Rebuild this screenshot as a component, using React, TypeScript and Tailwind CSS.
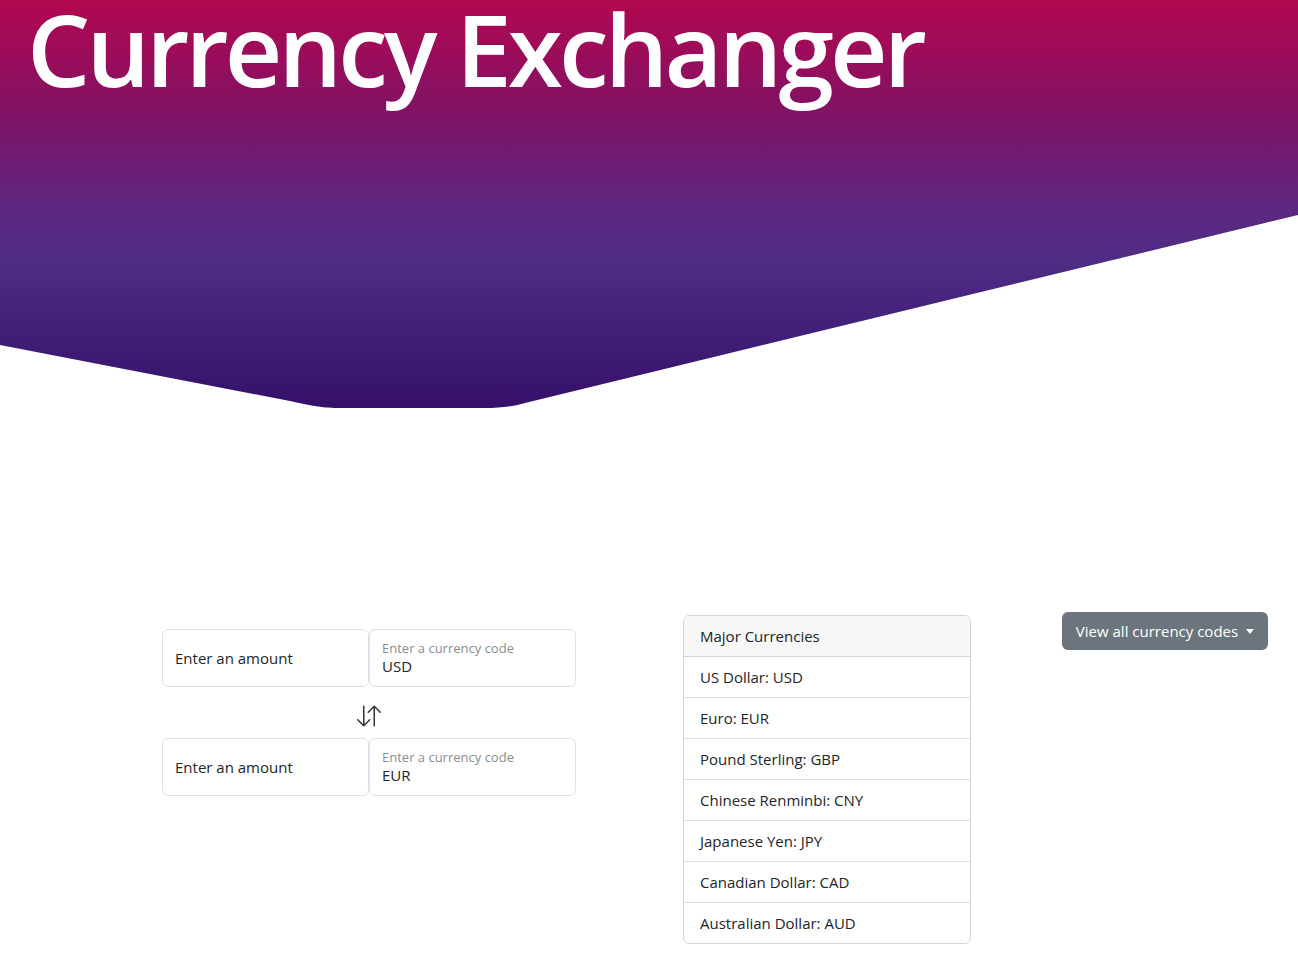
import React from "react";

const font = { fontFamily: '"Open Sans", "Noto Sans", sans-serif' };

const currencies = [
  "US Dollar: USD",
  "Euro: EUR",
  "Pound Sterling: GBP",
  "Chinese Renminbi: CNY",
  "Japanese Yen: JPY",
  "Canadian Dollar: CAD",
  "Australian Dollar: AUD",
];

function InputRow({ code }: { code: string }) {
  return (
    <div className="flex">
      <div className="w-[207px] h-[58px] border border-[#dee2e6] rounded-[6px] flex items-center px-[12px] text-[15px] text-[#212529]">
        Enter an amount
      </div>
      <div className="w-[207px] h-[58px] border border-[#dee2e6] rounded-[6px] flex flex-col justify-center px-[12px] leading-none">
        <span className="text-[13px] text-[#8a8d90] leading-[16px]">Enter a currency code</span>
        <span className="text-[15px] text-[#212529] leading-[20px]">{code}</span>
      </div>
    </div>
  );
}

export default function App() {
  return (
    <div className="w-[1298px] min-h-[964px] bg-white" style={font}>
      <header className="relative h-[408px]">
        <svg
          className="absolute inset-0 w-full h-full"
          viewBox="0 0 1298 408"
          preserveAspectRatio="none"
        >
          <defs>
            <linearGradient id="hg" x1="0" y1="0" x2="0" y2="1">
              <stop offset="0" stopColor="#b3074f" />
              <stop offset="0.3" stopColor="#7c1367" />
              <stop offset="0.5" stopColor="#5e2780" />
              <stop offset="0.65" stopColor="#4d2c85" />
              <stop offset="1" stopColor="#34106a" />
            </linearGradient>
          </defs>
          <path
            d="M0 0 H1298 V215 L525 403 C510 407 500 408 485 408 H345 C330 408 320 408 290 401 L0 345 Z"
            fill="url(#hg)"
          />
        </svg>
        <h1 className="relative pl-[27px] pt-0 text-white text-[100px] leading-[96px] tracking-[-3.85px] font-semibold">
          Currency Exchanger
        </h1>
      </header>

      <main className="flex items-start mt-[204px] text-[15px] text-[#212529]">
        <div className="ml-[162px] mt-[17px] w-[414px] flex flex-col">
          <InputRow code="USD" />
          <div className="h-[51px] flex items-start justify-center pt-[17px]">
            <svg width="24" height="24" viewBox="0 0 16 16" fill="#333">
              <path d="M11.5 15a.5.5 0 0 0 .5-.5V2.707l3.146 3.147a.5.5 0 0 0 .708-.708l-4-4a.5.5 0 0 0-.708 0l-4 4a.5.5 0 1 0 .708.708L11 2.707V14.5a.5.5 0 0 0 .5.5m-7-14a.5.5 0 0 1 .5.5v11.793l3.146-3.147a.5.5 0 0 1 .708.708l-4 4a.5.5 0 0 1-.708 0l-4-4a.5.5 0 0 1 .708-.708L4 13.293V1.5a.5.5 0 0 1 .5-.5" />
            </svg>
          </div>
          <InputRow code="EUR" />
        </div>

        <div className="ml-[107px] mt-[3px] w-[288px] border border-[#d6d6d6] rounded-[6px] overflow-hidden">
          <div className="h-[41px] bg-[#f7f7f7] flex items-center px-[16px] border-b border-[#d6d6d6]">
            Major Currencies
          </div>
          {currencies.map((c, i) => (
            <div
              key={c}
              className={
                i < currencies.length - 1
                  ? "h-[41px] flex items-center px-[16px] border-b border-[#dedede]"
                  : "h-[40px] flex items-center px-[16px]"
              }
            >
              {c}
            </div>
          ))}
        </div>

        <button className="ml-[91px] h-[38px] w-[206px] bg-[#6c757d] text-white rounded-[6px] flex items-center justify-center text-[15px]">
          View all currency codes
          <span className="ml-[8px] w-0 h-0 border-t-[5px] border-t-white border-l-[4px] border-l-transparent border-r-[4px] border-r-transparent" />
        </button>
      </main>
    </div>
  );
}
